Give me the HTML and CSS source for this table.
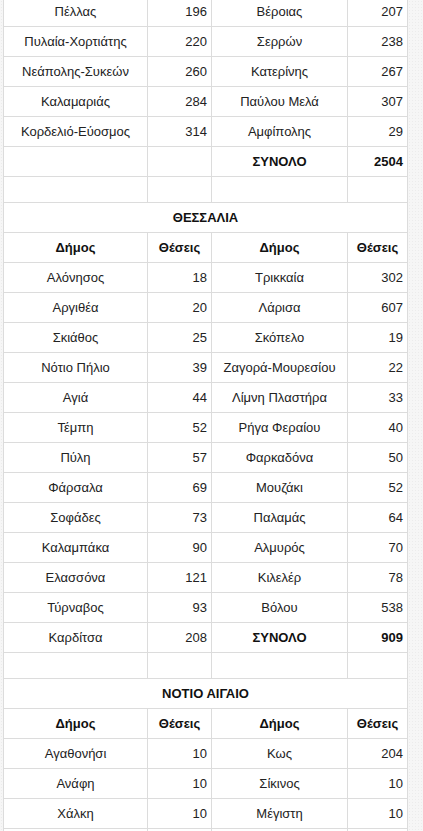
FILE: index.html
```html
<!DOCTYPE html>
<html lang="el">
<head>
<meta charset="utf-8">
<title>Θέσεις ανά Δήμο</title>
<link rel="stylesheet" href="styles.css">
</head>
<body>
<div class="page">
<table class="seats">
<colgroup>
<col class="c-name"><col class="c-num"><col class="c-name2"><col class="c-num2">
</colgroup>
<tbody>
<tr><td>Πέλλας</td><td class="num">196</td><td>Βέροιας</td><td class="num">207</td></tr>
<tr><td>Πυλαία-Χορτιάτης</td><td class="num">220</td><td>Σερρών</td><td class="num">238</td></tr>
<tr><td>Νεάπολης-Συκεών</td><td class="num">260</td><td>Κατερίνης</td><td class="num">267</td></tr>
<tr><td>Καλαμαριάς</td><td class="num">284</td><td>Παύλου Μελά</td><td class="num">307</td></tr>
<tr><td>Κορδελιό-Εύοσμος</td><td class="num">314</td><td>Αμφίπολης</td><td class="num">29</td></tr>
<tr><td></td><td></td><td class="b">ΣΥΝΟΛΟ</td><td class="num b">2504</td></tr>
<tr class="gap"><td></td><td></td><td></td><td></td></tr>
<tr><td colspan="4" class="b region">ΘΕΣΣΑΛΙΑ</td></tr>
<tr class="head"><td>Δήμος</td><td>Θέσεις</td><td>Δήμος</td><td>Θέσεις</td></tr>
<tr><td>Αλόνησος</td><td class="num">18</td><td>Τρικκαία</td><td class="num">302</td></tr>
<tr><td>Αργιθέα</td><td class="num">20</td><td>Λάρισα</td><td class="num">607</td></tr>
<tr><td>Σκιάθος</td><td class="num">25</td><td>Σκόπελο</td><td class="num">19</td></tr>
<tr><td>Νότιο Πήλιο</td><td class="num">39</td><td>Ζαγορά-Μουρεσίου</td><td class="num">22</td></tr>
<tr><td>Αγιά</td><td class="num">44</td><td>Λίμνη Πλαστήρα</td><td class="num">33</td></tr>
<tr><td>Τέμπη</td><td class="num">52</td><td>Ρήγα Φεραίου</td><td class="num">40</td></tr>
<tr><td>Πύλη</td><td class="num">57</td><td>Φαρκαδόνα</td><td class="num">50</td></tr>
<tr><td>Φάρσαλα</td><td class="num">69</td><td>Μουζάκι</td><td class="num">52</td></tr>
<tr><td>Σοφάδες</td><td class="num">73</td><td>Παλαμάς</td><td class="num">64</td></tr>
<tr><td>Καλαμπάκα</td><td class="num">90</td><td>Αλμυρός</td><td class="num">70</td></tr>
<tr><td>Ελασσόνα</td><td class="num">121</td><td>Κιλελέρ</td><td class="num">78</td></tr>
<tr><td>Τύρναβος</td><td class="num">93</td><td>Βόλου</td><td class="num">538</td></tr>
<tr><td>Καρδίτσα</td><td class="num">208</td><td class="b">ΣΥΝΟΛΟ</td><td class="num b">909</td></tr>
<tr class="gap"><td></td><td></td><td></td><td></td></tr>
<tr><td colspan="4" class="b region">ΝΟΤΙΟ ΑΙΓΑΙΟ</td></tr>
<tr class="head"><td>Δήμος</td><td>Θέσεις</td><td>Δήμος</td><td>Θέσεις</td></tr>
<tr><td>Αγαθονήσι</td><td class="num">10</td><td>Κως</td><td class="num">204</td></tr>
<tr><td>Ανάφη</td><td class="num">10</td><td>Σίκινος</td><td class="num">10</td></tr>
<tr><td>Χάλκη</td><td class="num">10</td><td>Μέγιστη</td><td class="num">10</td></tr>
<tr><td></td><td></td><td></td><td></td></tr>
</tbody>
</table>
</div>
</body>
</html>
```
FILE: styles.css
```css
html, body {
  margin: 0;
  padding: 0;
}
body {
  background-color: #f6f6f6;
  background-image: radial-gradient(#ececec 0.6px, transparent 0.8px);
  background-size: 3px 3px;
  font-family: "Liberation Sans", Arial, sans-serif;
  font-size: 13px;
  color: #222;
  overflow: hidden;
}
.page {
  padding-left: 3px;
  margin-top: -4px;
}
.seats {
  border-collapse: collapse;
  table-layout: fixed;
  width: 404px;
  background: #fff;
}
.c-name { width: 144px; }
.c-num { width: 64px; }
.c-name2 { width: 136px; }
.c-num2 { width: 60px; }
.seats td {
  border: 1px solid #dcdcdc;
  height: 30px;
  padding: 0 4px;
  box-sizing: border-box;
  text-align: center;
  vertical-align: middle;
  line-height: 15px;
  white-space: nowrap;
}
.seats td.num {
  text-align: right;
}
.seats .b,
.seats .head td {
  font-weight: bold;
  color: #111;
}
.seats tr.gap td {
  height: 26px;
}
.seats td.region {
  text-align: center;
}
```
